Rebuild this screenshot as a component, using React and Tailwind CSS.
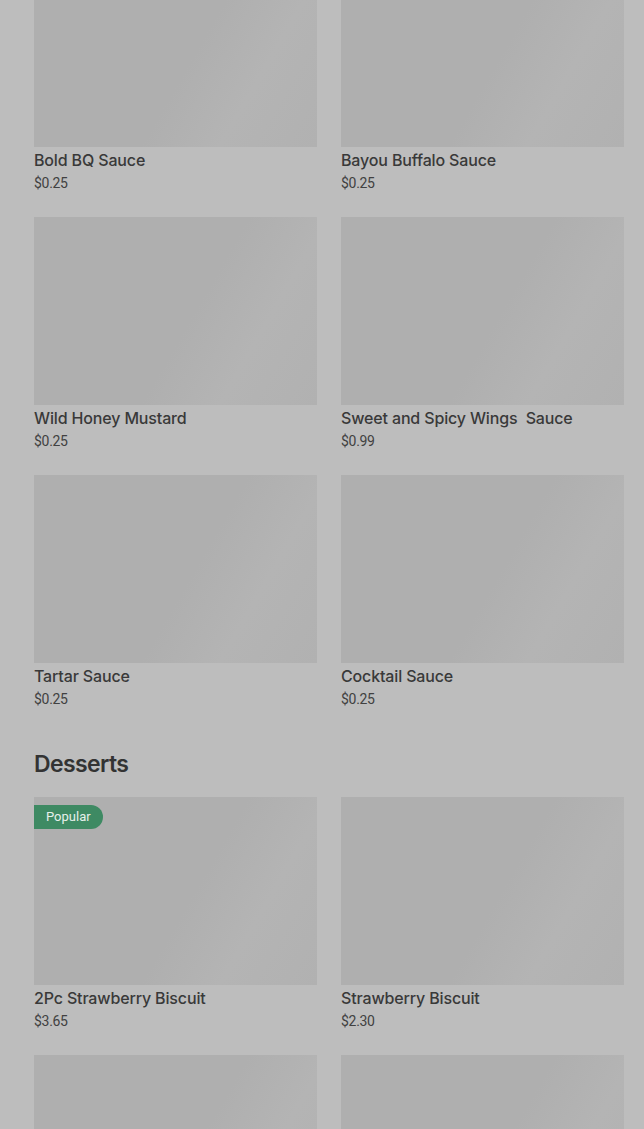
import React from "react";

const sauces = [
  ["Bold BQ Sauce", "$0.25"],
  ["Bayou Buffalo Sauce", "$0.25"],
  ["Wild Honey Mustard", "$0.25"],
  ["Sweet and Spicy Wings  Sauce", "$0.99"],
  ["Tartar Sauce", "$0.25"],
  ["Cocktail Sauce", "$0.25"],
];

const desserts = [
  ["2Pc Strawberry Biscuit", "$3.65", true],
  ["Strawberry Biscuit", "$2.30", false],
  ["", "", false],
  ["", "", false],
];

function Card({ name, price, popular }) {
  return (
    <div className="flex flex-col">
      <div className="relative h-[188px] bg-[linear-gradient(120deg,#afafaf_0%,#afafaf_55%,#b4b4b4_75%,#b1b1b1_100%)]">
        {popular && (
          <span className="absolute left-0 top-2 h-6 pl-3 pr-3 flex items-center rounded-r-full bg-[#3e8a63] text-[#e6f0ea] text-[13px] font-['Roboto',sans-serif]">
            Popular
          </span>
        )}
      </div>
      <div className="mt-[3px] text-[16px] leading-5 font-medium text-[#393939] font-['Inter',sans-serif] tracking-[-0.15px] whitespace-pre">
        {name}
      </div>
      <div className="mt-[3px] text-[14px] leading-5 text-[#414141] font-['Roboto',sans-serif] tracking-[-0.3px]">
        {price}
      </div>
    </div>
  );
}

export default function App() {
  return (
    <div className="min-h-[1129px] bg-[#bdbdbd] overflow-hidden">
      <div className="-mt-[41px] pl-[34px] pr-[20px]">
        <div className="grid grid-cols-2 gap-x-6 gap-y-6">
          {sauces.map(([n, p]) => (
            <Card key={n} name={n} price={p} />
          ))}
        </div>
        <h2 className="mt-[39px] mb-[17px] text-[23px] leading-8 font-semibold text-[#333333] font-['Inter',sans-serif] tracking-[-0.6px]">
          Desserts
        </h2>
        <div className="grid grid-cols-2 gap-x-6 gap-y-6">
          {desserts.map(([n, p, pop], i) => (
            <Card key={i} name={n} price={p} popular={pop} />
          ))}
        </div>
      </div>
    </div>
  );
}
